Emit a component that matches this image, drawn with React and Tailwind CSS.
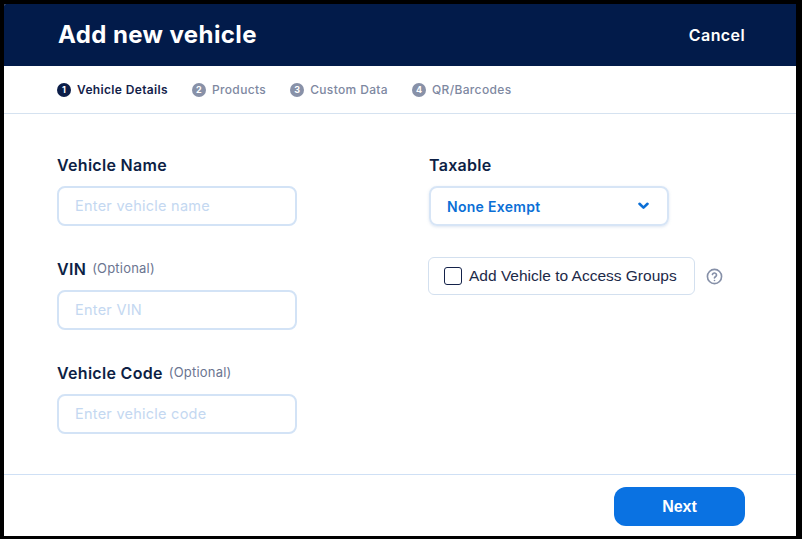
import React from "react";

const poppins = { fontFamily: "Inter, 'Noto Sans', sans-serif" };
const arial = { fontFamily: "'Liberation Sans', Arial, sans-serif" };

function Step({ n, label, active }) {
  return (
    <div className="flex items-center gap-[6px]">
      <div
        className={
          "w-[14px] h-[14px] rounded-full flex items-center justify-center text-white text-[9px] font-bold leading-none " +
          (active ? "bg-[#0b1d48]" : "bg-[#8891a8]")
        }
      >
        {n}
      </div>
      <span
        className={
          "text-[12px] leading-none tracking-[0.35px] " +
          (active ? "font-semibold text-[#13224a]" : "font-medium text-[#7e88a1]")
        }
      >
        {label}
      </span>
    </div>
  );
}

function Field({ label, optional, placeholder }) {
  return (
    <div className="flex flex-col">
      <div className="h-[20px] flex items-center gap-[6px]">
        <span className="text-[16px] font-semibold text-[#0d1f45] tracking-[0.3px]">{label}</span>
        {optional && <span className="text-[13px] text-[#6b7591] tracking-[0.2px]">(Optional)</span>}
      </div>
      <div className="mt-[11px] h-[40px] w-[240px] rounded-[8px] border-2 border-[#d3e3f6] flex items-center pl-[16px]">
        <span className="text-[14.5px] text-[#c4d8f1] tracking-[0.25px]">{placeholder}</span>
      </div>
    </div>
  );
}

export default function App() {
  return (
    <div className="w-[802px] h-[539px] bg-black pt-[4px] pl-[4px]" style={poppins}>
      <div className="w-[792px] h-[532px] bg-white flex flex-col overflow-hidden rounded-tl-[2px]">
        <div className="h-[62px] shrink-0 bg-[#021b4a] flex items-center justify-between pl-[54px] pr-[51px]">
          <h1 className="text-[24px] font-bold text-white tracking-[0.4px]">Add new vehicle</h1>
          <span className="text-[16px] font-semibold text-white tracking-[0.4px]">Cancel</span>
        </div>
        <div className="h-[48px] shrink-0 border-b border-[#d5e2f0] flex items-center gap-[24px] pl-[53px]">
          <Step n="1" label="Vehicle Details" active />
          <Step n="2" label="Products" />
          <Step n="3" label="Custom Data" />
          <Step n="4" label="QR/Barcodes" />
        </div>
        <div className="flex-1 flex pl-[53px] pt-[41px]">
          <div className="w-[240px] flex flex-col gap-[33px]">
            <Field label="Vehicle Name" placeholder="Enter vehicle name" />
            <Field label="VIN" optional placeholder="Enter VIN" />
            <Field label="Vehicle Code" optional placeholder="Enter vehicle code" />
          </div>
          <div className="ml-[132px] flex flex-col">
            <div className="h-[20px] flex items-center">
              <span className="text-[16px] font-semibold text-[#0d1f45] tracking-[0.3px]">Taxable</span>
            </div>
            <div className="mt-[11px] h-[40px] w-[240px] rounded-[8px] border-2 border-[#d7e5f6] shadow-[0_1px_3px_rgba(120,150,200,0.25)] flex items-center justify-between pl-[16px] pr-[18px]">
              <span className="text-[14px] font-semibold text-[#0b6fd6] tracking-[0.3px]">None Exempt</span>
              <svg width="11" height="8" viewBox="0 0 11 8" fill="none">
                <path d="M1.5 1.8 L5.5 5.6 L9.5 1.8" stroke="#0b6fd6" strokeWidth="2.6" strokeLinecap="round" strokeLinejoin="round" />
              </svg>
            </div>
            <div className="mt-[31px] flex items-center gap-[11px] -ml-[1px]">
              <div className="h-[38px] w-[267px] rounded-[6px] border border-[#d3e0ef] flex items-center pl-[15px] gap-[7px]">
                <div className="w-[18px] h-[18px] rounded-[3px] border-[1.5px] border-[#14224a] bg-white" />
                <span className="text-[15.5px] text-[#1c2948]" style={arial}>Add Vehicle to Access Groups</span>
              </div>
              <svg width="17" height="17" viewBox="0 0 24 24" fill="none" stroke="#8690a8" strokeWidth="2.3" strokeLinecap="round" strokeLinejoin="round">
                <circle cx="12" cy="12" r="10" />
                <path d="M9.1 9a3 3 0 0 1 5.8 1c0 2-3 2.6-3 4.2" />
                <path d="M12 17.6h.01" />
              </svg>
            </div>
          </div>
        </div>
        <div className="h-[62px] shrink-0 border-t border-[#cfe0f5] flex items-start justify-end pr-[51px] pt-[12px]">
          <button className="w-[131px] h-[39px] rounded-[12px] bg-[#0a72e2] text-white text-[16px] font-bold" style={arial}>
            Next
          </button>
        </div>
      </div>
    </div>
  );
}
